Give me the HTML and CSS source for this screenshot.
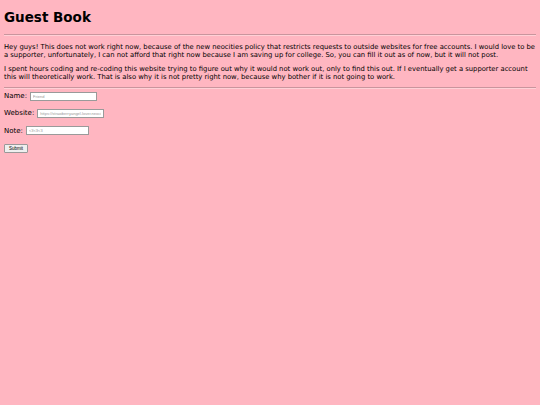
FILE: index.html
```html
<!DOCTYPE html>
<html>
<head>
<meta charset="utf-8">
<link rel="stylesheet" href="styles.css">
</head>
<body>
<h1 class="title">Guest Book</h1>
<hr class="rule">
<p class="text">Hey guys! This does not work right now, because of the new neocities policy that restricts requests to outside websites for free accounts. I would love to be a supporter, unfortunately, I can not afford that right now because I am saving up for college. So, you can fill it out as of now, but it will not post.</p>
<p class="text text-last">I spent hours coding and re-coding this website trying to figure out why it would not work out, only to find this out. If I eventually get a supporter account this will theoretically work. That is also why it is not pretty right now, because why bother if it is not going to work.</p>
<hr class="rule rule-low">
<form class="form">
  <div class="row"><label class="label">Name:</label><input class="field f-name" type="text" placeholder="Friend"></div>
  <div class="row"><label class="label">Website:</label><input class="field f-site" type="text" placeholder="https://strawberryangel-lover.neocities.org"></div>
  <div class="row"><label class="label">Note:</label><input class="field f-note" type="text" placeholder="&lt;3&lt;3&lt;3"></div>
  <div class="row"><button class="btn" type="button">Submit</button></div>
</form>
</body>
</html>
```
FILE: styles.css
```css
html, body { margin: 0; padding: 0; }
body {
  background: #ffb6c1;
  padding: 4px;
  font-family: "DejaVu Sans", Verdana, sans-serif;
  color: #000;
  min-height: 397px;
}
.title {
  font-size: 13.5px;
  font-weight: bold;
  margin: 5px 0 9px 0;
  line-height: 16px;
}
.rule {
  border: none;
  border-top: 1px solid #c9959d;
  border-bottom: 1px solid #ffd0d6;
  margin: 4px 0;
}
.rule-low { margin-top: 3px; margin-bottom: 3px; }
.text {
  font-size: 6.8px;
  line-height: 8px;
  margin: 6.5px 0;
}
.text-last { margin-bottom: 5.5px; }
.form { margin: 0; font-size: 7px; }
.row {
  display: flex;
  align-items: center;
  height: 9px;
  margin: 0 0 8.4px 0;
}
.label { margin-right: 3px; }
.field {
  box-sizing: border-box;
  height: 9px;
  padding: 0 2px;
  border: 1px solid #9a9a9a;
  background: #fff;
  font-size: 4px;
  font-family: "Liberation Sans", Arial, sans-serif;
}
.field::placeholder { color: #999; }
.f-name { width: 67px; }
.f-site { width: 67px; }
.f-note { width: 63px; }
.btn {
  box-sizing: border-box;
  height: 9px;
  width: 24px;
  padding: 0;
  font-size: 4.5px;
  font-family: "Liberation Sans", Arial, sans-serif;
  border: 1px solid #999;
  border-radius: 1px;
  background: #efefef;
}
```
